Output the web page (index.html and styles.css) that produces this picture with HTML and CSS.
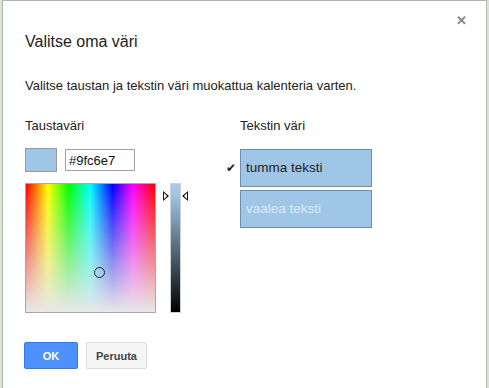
FILE: index.html
```html
<!DOCTYPE html>
<html>
  <head>
    <meta charset="UTF-8">
    <title>Valitse oma väri</title>
    <link rel="stylesheet" href="styles.css">
  </head>
  <body>
    <div class="dialog">
      <span class="close">&#x2715;</span>
      <h1 class="title">Valitse oma väri</h1>
      <p class="desc">Valitse taustan ja tekstin väri muokattua kalenteria varten.</p>

      <div class="columns">
        <div class="bg-col">
          <div class="label">Taustaväri</div>
          <div class="swatch-row">
            <div class="swatch"></div>
            <input type="text" class="hex" value="#9fc6e7">
          </div>
          <div class="picker">
            <div class="spectrum">
              <span class="cursor"></span>
            </div>
            <div class="slider">
              <span class="arrow arrow-left"></span>
              <div class="bar"></div>
              <span class="arrow arrow-right"></span>
            </div>
          </div>
        </div>

        <div class="text-col">
          <div class="label">Tekstin väri</div>
          <div class="choice">
            <span class="check">&#x2714;</span>
            <div class="sample dark">tumma teksti</div>
          </div>
          <div class="choice">
            <span class="check"></span>
            <div class="sample light">vaalea teksti</div>
          </div>
        </div>
      </div>

      <div class="buttons">
        <button class="btn btn-ok">OK</button>
        <button class="btn btn-cancel">Peruuta</button>
      </div>
    </div>
  </body>
</html>
```

FILE: styles.css
```css
*
{
  box-sizing: border-box;
}

html, body
{
  height: 100%;
}

body
{
  margin: 0;
  background: #d8e6cd;
  font-family: "Liberation Sans", Arial, sans-serif;
  color: #222;
  overflow: hidden;
}

.dialog
{
  position: relative;
  margin: 0 2px 0 2px;
  height: 100%;
  background: #fff;
  border: 1px solid #b4b4b4;
  border-bottom: none;
  padding: 0 22px;
}

.close
{
  position: absolute;
  top: 12px;
  right: 19px;
  font-size: 13px;
  color: #888;
  font-weight: bold;
}

.title
{
  margin: 0;
  padding-top: 31px;
  font-size: 16px;
  font-weight: normal;
  line-height: 20px;
  color: #222;
}

.desc
{
  margin: 26px 0 0 0;
  font-size: 13px;
  line-height: 16px;
}

.columns
{
  display: flex;
  margin-top: 24px;
}

.label
{
  font-size: 13px;
  line-height: 16px;
}

.bg-col
{
  width: 205px;
}

.swatch-row
{
  display: flex;
  align-items: center;
  margin-top: 14px;
}

.swatch
{
  width: 32px;
  height: 24px;
  background: #9fc6e7;
  border: 1px solid #9a9a9a;
}

.hex
{
  margin-left: 8px;
  width: 70px;
  height: 22px;
  border: 1px solid #a0a0a0;
  padding: 0 3px;
  font-family: "Liberation Sans", Arial, sans-serif;
  font-size: 13px;
  color: #111;
}

.picker
{
  display: flex;
  margin-top: 11px;
}

.spectrum
{
  position: relative;
  width: 131px;
  height: 130px;
  border: 1px solid #a8a8a8;
  background:
    linear-gradient(to bottom, rgba(232, 232, 232, 0) 0%, rgba(232, 232, 232, 1) 100%),
    linear-gradient(to right, #f00 0%, #ff0 17%, #0f0 33%, #0ff 50%, #00f 67%, #f0f 83%, #f00 100%);
}

.cursor
{
  position: absolute;
  left: 68px;
  top: 83px;
  width: 11px;
  height: 11px;
  border: 1px solid #222;
  border-radius: 50%;
}

.slider
{
  display: flex;
  align-items: flex-start;
  margin-left: 7px;
}

.bar
{
  width: 11px;
  height: 130px;
  border: 1px solid #d0d0d0;
  background: linear-gradient(to bottom, #a6cbec 0%, #9fc6e7 8%, #000 100%);
}

.arrow
{
  margin-top: 8px;
  width: 0;
  height: 0;
  border-top: 5px solid transparent;
  border-bottom: 5px solid transparent;
  position: relative;
}

.arrow-left
{
  border-left: 6px solid #111;
  margin-right: 1px;
}

.arrow-right
{
  border-right: 6px solid #111;
  margin-left: 1px;
}

.arrow-left::after,
.arrow-right::after
{
  content: "";
  position: absolute;
  top: -3px;
  width: 0;
  height: 0;
  border-top: 3px solid transparent;
  border-bottom: 3px solid transparent;
}

.arrow-left::after
{
  left: -5px;
  border-left: 3px solid #fff;
}

.arrow-right::after
{
  left: 2px;
  border-right: 3px solid #fff;
}

.text-col
{
  margin-left: 10px;
}

.choice
{
  display: flex;
  align-items: center;
  margin-left: -14px;
}

.choice:nth-child(2)
{
  margin-top: 15px;
}

.choice + .choice
{
  margin-top: 3px;
}

.check
{
  width: 14px;
  font-size: 12px;
  color: #222;
}

.sample
{
  width: 132px;
  height: 38px;
  background: #9fc6e7;
  border: 1px solid #6d8fae;
  padding-left: 5px;
  font-size: 13.5px;
  line-height: 36px;
}

.dark
{
  color: #1d1d1d;
}

.light
{
  color: #dce9f5;
}

.buttons
{
  margin-top: 29px;
  display: flex;
}

.btn
{
  height: 27px;
  border-radius: 2px;
  font-family: "Liberation Sans", Arial, sans-serif;
  font-size: 11px;
  font-weight: bold;
  padding: 0;
}

.btn-ok
{
  width: 54px;
  margin-left: -1px;
  background: #4d90fe;
  border: 1px solid #3079ed;
  color: #fff;
}

.btn-cancel
{
  width: 61px;
  margin-left: 8px;
  background: #f5f5f5;
  border: 1px solid #dcdcdc;
  color: #444;
}
```
